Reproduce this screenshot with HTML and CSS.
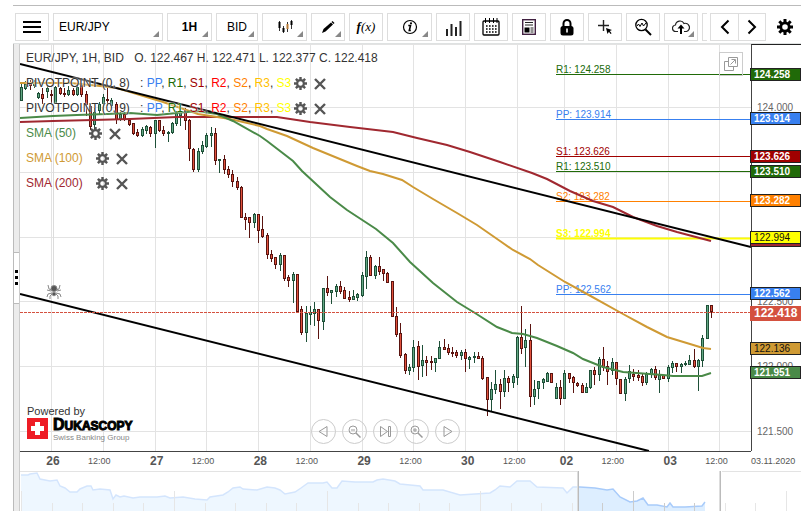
FILE: index.html
```
<!DOCTYPE html>
<html lang="en">
<head>
    <meta charset="utf-8">
    <title>EUR/JPY chart</title>
    <link rel="stylesheet" href="styles.css">
</head>
<body>
    <svg class="defs" aria-hidden="true">
        <symbol id="gear" viewBox="0 0 16 16">
            <circle cx="8" cy="8" r="4.2" fill="none" stroke="currentColor" stroke-width="2.8"/>
            <path d="M8 0v3M8 13v3M0 8h3M13 8h3M2.3 2.3l2.2 2.2M11.5 11.5l2.2 2.2M13.7 2.3l-2.2 2.2M4.5 11.5l-2.2 2.2" stroke="currentColor" stroke-width="3"/>
        </symbol>
        <symbol id="cross" viewBox="0 0 12 12">
            <path d="M1 1l10 10M11 1L1 11" stroke="currentColor" stroke-width="2.4"/>
        </symbol>
    </svg>

    <header class="toolbar">
        <div class="tools">
            <button class="tool" aria-label="Menu"><svg width="18" height="14" viewBox="0 0 18 14"><path d="M0 2h18M0 7h18M0 12h18" stroke="#000" stroke-width="2"/></svg></button>
            <button class="tool instrument more">EUR/JPY</button>
            <button class="tool wide more"><b>1H</b></button>
            <button class="tool offer more">BID</button>
            <button class="tool wide more" aria-label="Chart type"><svg width="18" height="16" viewBox="0 0 18 16"><path d="M3.500 2v10M7.500 7v7M11.500 3v10M15.500 1v9" stroke="#333"/><path d="M3.500 3v6M7.500 9v4M15.500 2v4" stroke="#000" stroke-width="2"/><path d="M11.500 5v5" stroke="#b87a35" stroke-width="2"/></svg></button>
            <button class="tool more" aria-label="Draw"><svg width="14" height="14" viewBox="0 0 14 14"><path d="M1 13l1.500-4L10 2.500l2 2L4.500 11.500z"/><path d="M10.500 2l1-1 2 2-1 1z"/></svg></button>
            <button class="tool fx" aria-label="Indicators"><i>f</i>(x)</button>
            <button class="tool wide more" aria-label="Information"><svg width="16" height="16" viewBox="0 0 16 16"><circle cx="8" cy="8" r="6.500" fill="none" stroke="#000" stroke-width="1.200"/><path d="M6.300 6.500h2.200L7.300 11.500h1.500" fill="none" stroke="#000" stroke-width="1.600"/><circle cx="9" cy="4.300" r="1.100"/></svg></button>
            <button class="tool" aria-label="Volume"><svg width="17" height="18" viewBox="0 0 17 18"><path d="M2 11v7M6.500 6v12M11 9v9M15.500 3v15" stroke="#222" stroke-width="2"/></svg></button>
            <button class="tool" aria-label="Calendar"><svg width="18" height="18" viewBox="0 0 18 18"><rect x="1" y="3" width="16" height="14" rx="1" fill="none" stroke="#000" stroke-width="1.300"/><path d="M3.500 0v5M7.500 0v5M11.500 0v5M15 0v5" stroke="#000"/><path d="M4 8h11M4 11h11M4 14h11" stroke="#000" stroke-width="1.600" stroke-dasharray="1.600 1.400"/></svg></button>
            <button class="tool" aria-label="News"><svg width="14" height="16" viewBox="0 0 14 16"><rect x=".7" y=".7" width="12.600" height="14.600" fill="none" stroke="#402040" stroke-width="1.400"/><path d="M3 3.500h8M3 6h8M8.500 9h3M8.500 11h3M8.500 13h3" stroke="#222"/><path d="M2.500 8.500h5v5h-5z"/></svg></button>
            <button class="tool" aria-label="Lock"><svg width="14" height="17" viewBox="0 0 14 17"><path d="M3.500 8V4.500a3.500 3.500 0 0 1 7 0V8" fill="none" stroke="#000" stroke-width="2"/><rect x=".5" y="7" width="13" height="9.500" rx="2.500"/><path d="M7 9.500v4" stroke="#fff" stroke-width="1.600"/></svg></button>
            <button class="tool" aria-label="Crosshair"><svg width="16" height="16" viewBox="0 0 16 16"><path d="M6.500 1v11M1 6.500h11" stroke="#222" stroke-width="1.400"/><path d="M9 9l6 2-2.200 1 1.800 2.300-1 .7-1.700-2.300L10.500 15z"/></svg></button>
            <button class="tool" aria-label="Zoom chart"><svg width="18" height="18" viewBox="0 0 18 18"><circle cx="7.500" cy="7" r="5.700" fill="none" stroke="#000" stroke-width="1.300"/><path d="M3 8l1.500-2 1.500 2.500L8 5l1.500 3L12 5" fill="none" stroke="#000"/><path d="M11.500 11.500L17 17" stroke="#000" stroke-width="2"/></svg></button>
            <button class="tool more" aria-label="Save"><svg width="18" height="16" viewBox="0 0 18 16"><path d="M6 12.500H4A3.200 3.200 0 0 1 3.500 6 4.500 4.500 0 0 1 12 4.500a4 4 0 0 1 2.500 8H12" fill="none" stroke="#222" stroke-width="1.200"/><path d="M9 15V8" stroke="#000" stroke-width="2"/><path d="M9 5.500l3.500 4h-7z"/></svg></button>
            <button class="tool" aria-label="More"></button>
        </div>
        <div class="pager">
            <button aria-label="Scroll left"><svg width="10" height="16" viewBox="0 0 10 16"><path d="M8.500 1.500L2 8l6.500 6.500" fill="none" stroke="#000" stroke-width="2"/></svg></button>
            <button aria-label="Scroll right"><svg width="10" height="16" viewBox="0 0 10 16"><path d="M1.500 1.500L8 8l-6.500 6.500" fill="none" stroke="#000" stroke-width="2"/></svg></button>
        </div>
        <button class="settings" aria-label="Settings"><svg width="16" height="16"><use href="#gear"/></svg></button>
    </header>

    <main class="workspace">
        <div class="rail">
            <button class="rail-handle" aria-label="Open side panel"><span></span><span></span><span></span></button>
        </div>

        <div class="chart">
            <section class="plot">
                <svg id="plot" class="canvas" viewBox="0 0 731 407" preserveAspectRatio="none">
                    <g id="grid" stroke="#e3e3e3"></g>
                    <path d="M33.500 0v241" stroke="#dcdcdc"/>
                    <g id="candles" shape-rendering="crispEdges"></g>
                    <g id="pivots"></g>
                    <g id="averages" fill="none" stroke-width="2"></g>
                    <path d="M0 20L731 203M0 250L629 407" stroke="#000" stroke-width="2"/>
                    <path d="M0 268.500h731" stroke="#d4513f" stroke-dasharray="3 1"/>
                    <g fill="none" stroke="#888"><path d="M32 246l-3-1-1-4M31 247l-4-1M32 249l-4 1-1 3M32 250l-2 2v3M36 246l3-1 1-4M37 247l4-1M36 249l4 1 1 3M36 250l2 2v3"/><circle cx="34" cy="244.500" r="3" fill="#555"/><circle cx="34" cy="250" r="1.800" fill="#555"/></g>
                </svg>

                <div class="legend">
                    <p class="quote">EUR/JPY, 1H, BID <span>O. 122.467 H. 122.471 L. 122.377 C. 122.418</span></p>
                    <div class="study pivot">
                        <span class="name">PIVOTPOINT (0, 8)</span>
                        <span>: <b class="pp">PP</b>, <b class="r1">R1</b>, <b class="s1">S1</b>, <b class="r2">R2</b>, <b class="s2">S2</b>, <b class="r3">R3</b>, <b class="s3">S3</b></span>
                        <button aria-label="Edit pivot point 8"><svg width="13" height="13"><use href="#gear"/></svg></button>
                        <button aria-label="Remove pivot point 8"><svg width="12" height="12"><use href="#cross"/></svg></button>
                    </div>
                    <div class="study pivot">
                        <span class="name">PIVOTPOINT (0, 9)</span>
                        <span>: <b class="pp">PP</b>, <b class="r1">R1</b>, <b class="s1">S1</b>, <b class="r2">R2</b>, <b class="s2">S2</b>, <b class="r3">R3</b>, <b class="s3">S3</b></span>
                        <button aria-label="Edit pivot point 9"><svg width="13" height="13"><use href="#gear"/></svg></button>
                        <button aria-label="Remove pivot point 9"><svg width="12" height="12"><use href="#cross"/></svg></button>
                    </div>
                    <div class="study sma50">
                        <span>SMA (50)</span>
                        <button aria-label="Edit SMA 50"><svg width="13" height="13"><use href="#gear"/></svg></button>
                        <button aria-label="Remove SMA 50"><svg width="12" height="12"><use href="#cross"/></svg></button>
                    </div>
                    <div class="study sma100">
                        <span>SMA (100)</span>
                        <button aria-label="Edit SMA 100"><svg width="13" height="13"><use href="#gear"/></svg></button>
                        <button aria-label="Remove SMA 100"><svg width="12" height="12"><use href="#cross"/></svg></button>
                    </div>
                    <div class="study sma200">
                        <span>SMA (200)</span>
                        <button aria-label="Edit SMA 200"><svg width="13" height="13"><use href="#gear"/></svg></button>
                        <button aria-label="Remove SMA 200"><svg width="12" height="12"><use href="#cross"/></svg></button>
                    </div>
                </div>

                <button class="popout" aria-label="Open in new window"><svg width="14" height="14" viewBox="0 0 14 14" fill="none" stroke="#999"><path d="M4.500.5h9v9h-9z"/><path d="M4 4.500H.5v9h9V10M6.500 7.500l4.500-4.500M7.500 2.500h4v4"/></svg></button>

                <div class="powered">
                    <div>Powered by</div>
                    <a class="brand" href="#">
                        <svg width="21" height="21" viewBox="0 0 21 21"><path fill="#ee1c25" d="M0 0h21v21H0z"/><path fill="#fff" d="M8 4h5v4h4v5h-4v4H8v-4H4V8h4z"/></svg>
                        <span class="brand-text"><strong><big>D</big>UKASCOPY</strong><small>Swiss Banking Group</small></span>
                    </a>
                </div>

                <div class="zoombar">
                    <button aria-label="Back"><svg width="13" height="13" viewBox="0 0 13 13"><path d="M10 1.500v10L2 6.500z"/></svg></button>
                    <button aria-label="Zoom out"><svg width="13" height="13" viewBox="0 0 13 13"><circle cx="5" cy="5" r="4"/><path d="M3 5h4"/><path d="M8 8l4.500 4.500" stroke-width="1.500"/></svg></button>
                    <button aria-label="To latest"><svg width="13" height="13" viewBox="0 0 13 13"><path d="M1.500 1.500v10l7-5zM9.500 1.500h2v10h-2z"/></svg></button>
                    <button aria-label="Zoom in"><svg width="13" height="13" viewBox="0 0 13 13"><circle cx="5" cy="5" r="4"/><path d="M3 5h4M5 3v4"/><path d="M8 8l4.500 4.500" stroke-width="1.500"/></svg></button>
                    <button aria-label="Forward"><svg width="13" height="13" viewBox="0 0 13 13"><path d="M3 1.500v10l8-5z"/></svg></button>
                </div>
            </section>

            <aside class="prices" id="prices"></aside>

            <div class="times">
                <div class="ticks">
                    <b>26</b><span>12:00</span><b>27</b><span>12:00</span><b>28</b><span>12:00</span><b>29</b><span>12:00</span><b>30</b><span>12:00</span>
                </div>
                <div class="ticks after-weekend">
                    <b>02</b><span>12:00</span><b>03</b><span>12:00</span>
                </div>
                <span class="date">03.11.2020</span>
            </div>

            <div class="navigator">
                <svg id="navigator" class="canvas" viewBox="0 0 781 40" preserveAspectRatio="none"></svg>
            </div>
        </div>
    </main>

    <script src="chart.js"></script>
</body>
</html>
```
FILE: styles.css
```
* {
    box-sizing: border-box;
}

body {
    margin: 0;
    padding: 5px 5px 5px 13px;
    height: 100vh;
    min-height: 400px;
    display: flex;
    flex-direction: column;
    background: #fff;
    color: #333;
    font-family: "Liberation Sans", Arial, sans-serif;
    font-size: 12px;
}

button {
    margin: 0;
    padding: 0;
    border: 0;
    background: none;
    color: inherit;
    font: inherit;
    cursor: pointer;
    display: flex;
    align-items: center;
    justify-content: center;
}

.defs {
    position: absolute;
    width: 0;
    height: 0;
}

.canvas {
    display: block;
    width: 100%;
    height: 100%;
}

/* toolbar */
.toolbar {
    display: flex;
    gap: 3px;
    padding: 7px 0 2px 2px;
    border-top: 1px solid #bbb;
    border-bottom: 1px solid #dfe2e2;
}

.tools {
    flex: 1;
    min-width: 0;
    display: flex;
    gap: 4px;
    overflow: hidden;
}

.tool {
    flex: none;
    position: relative;
    width: 34px;
    height: 28px;
    border: 1px solid #ddd;
    background: #fff;
    color: #000;
}

.tool.wide {
    width: 45px;
}

.tool.offer {
    width: 42px;
}

.tool.instrument {
    width: 110px;
    justify-content: flex-start;
    padding-left: 5px;
}

.tool.more::after {
    content: "";
    position: absolute;
    right: 3px;
    bottom: 3px;
    border-left: 6px solid transparent;
    border-bottom: 6px solid #888;
}

.tool.fx {
    font-family: "Liberation Serif", serif;
    font-size: 13px;
    font-style: italic;
}

.tool.fx i {
    font-weight: bold;
}

.pager {
    display: flex;
    border: 1px solid #ddd;
}

.pager button {
    width: 27px;
}

.pager button + button {
    border-left: 1px solid #ddd;
}

.settings {
    width: 32px;
    color: #000;
}

/* workspace */
.workspace {
    flex: 1;
    min-height: 0;
    display: flex;
}

.rail {
    width: 7px;
    display: flex;
    align-items: center;
    background: #ececec;
    border-left: 1px solid #bbb;
    border-right: 1px solid #ccc;
}

.rail-handle {
    width: 5px;
    height: 52px;
    flex-direction: column;
    gap: 3px;
    background: #fff;
    border-top: 1px solid #bbb;
    border-bottom: 1px solid #bbb;
}

.rail-handle span {
    width: 3px;
    height: 3px;
    background: #000;
}

.chart {
    flex: 1;
    min-width: 0;
    display: grid;
    grid-template-columns: 1fr 50px;
    grid-template-rows: 1fr 20px 40px;
}

.plot {
    position: relative;
    min-width: 0;
    min-height: 0;
    overflow: hidden;
}

.plot .canvas text {
    font-size: 10px;
}

/* legend */
.legend {
    position: absolute;
    left: 6px;
    top: 2px;
    line-height: 25px;
    text-shadow: 0 0 2px #fff, 0 0 2px #fff;
}

.quote {
    margin: 0;
}

.quote span {
    margin-left: 7px;
}

.study {
    display: flex;
    align-items: center;
    gap: 7px;
}

.study b {
    font-weight: normal;
}

.study button {
    color: #555;
}

.study span + button {
    margin-left: 6px;
}

.pivot span + button {
    margin-left: -4px;
}

.pivot .name {
    width: 107px;
    white-space: nowrap;
}

.pp { color: #3880f0; }
.r1 { color: #206a08; }
.s1 { color: #a00000; }
.r2 { color: #ff0000; }
.s2 { color: #ff8000; }
.r3 { color: #ffc000; }
.s3 { color: #ffff00; }
.sma50 { color: #4a8a48; }
.sma100 { color: #cf9a34; }
.sma200 { color: #a02830; }

.popout {
    position: absolute;
    top: 8px;
    right: 8px;
    width: 24px;
    height: 24px;
    border: 1px solid #ccc;
}

.powered {
    position: absolute;
    left: 7px;
    bottom: 8px;
    font-size: 11px;
    line-height: 13px;
}

.brand {
    display: flex;
    gap: 5px;
    color: #000;
    text-decoration: none;
}

.brand-text {
    display: flex;
    flex-direction: column;
}

.brand strong {
    font-size: 12px;
    font-weight: 900;
    line-height: 13px;
    -webkit-text-stroke: 1px #000;
}

.brand big {
    font-size: 16px;
    line-height: 13px;
}

.brand small {
    font-size: 8px;
    line-height: 10px;
    color: #888;
}

.zoombar {
    position: absolute;
    left: 0;
    right: 0;
    bottom: 7px;
    display: flex;
    justify-content: center;
    gap: 6px;
}

.zoombar button {
    width: 25px;
    height: 25px;
    border: 1px solid #ccc;
    border-radius: 50%;
}

.zoombar svg {
    fill: none;
    stroke: #999;
}

/* price axis */
.prices {
    position: relative;
    border-top: 1px solid #222;
    border-left: 1px solid #444;
    font-size: 10px;
    color: #666;
}

.prices span {
    position: absolute;
    left: -2px;
    right: 0;
    height: 13px;
    margin-top: -7px;
    padding-left: 4px;
    line-height: 13px;
}

.prices .scale {
    padding-left: 7px;
}

.prices .badge {
    border: 1px solid #222;
    padding-left: 3px;
    line-height: 11px;
    color: #fff;
    font-weight: bold;
}

.prices .dark {
    color: #111;
    font-weight: normal;
}

.prices .last {
    height: 15px;
    line-height: 15px;
    font-size: 12px;
    font-weight: bold;
    color: #fff;
    background: #d4513f;
}

.badge.pp { background: #3880f0; }
.badge.r1 { background: #206a08; }
.badge.s1 { background: #a00000; }
.badge.s2 { background: #ff8000; }
.badge.s3 { background: #ffff00; }
.badge.sma50 { background: #4a8a48; }
.badge.sma100 { background: #cf9a34; }
.badge.sma200 { background: #a02830; }

/* time axis */
.times {
    grid-column: 1 / -1;
    display: flex;
    align-items: center;
    padding-left: 6px;
    font-size: 9px;
    color: #555;
    background: linear-gradient(#444, #444) no-repeat 0 0 / calc(100% - 50px) 1px;
}

.ticks {
    flex: 10;
    display: grid;
    grid-auto-flow: column;
    grid-auto-columns: 1fr;
    align-items: center;
    text-align: center;
}

.ticks.after-weekend {
    flex: 4;
    margin-left: -5px;
}

.ticks b {
    font-size: 12px;
    padding-left: 2px;
}

.ticks span {
    padding-right: 9px;
}

.date {
    width: 54px;
    padding-left: 4px;
}

.navigator {
    grid-column: 1 / -1;
    min-height: 0;
}
```
FILE: chart.js
```
var NS = 'http://www.w3.org/2000/svg';

// visible price range
var TOP_PRICE = 124.49;
var RANGE = 3.14;
var HEIGHT = 407;

// every 12 hours, the weekend is left out
var gridX = [31, 83, 135, 186, 238, 290, 342, 393, 445, 497, 544, 596, 648, 699];

// one candle per hour: high top bottom low (chart units), u = up, d = down
var candles = `
38 43 57 57 u,37 40 45 46 u,36 38 42 46 d,36 38 42 44 u,48 49 54 55 u,44 50 55 60 d,42 44 48 54 u,46 50 52 60 d,
42 43 60 60 u,43 44 50 51 d,44 49 51 53 d,42 46 51 52 u,44 46 51 52 d,42 43 51 52 u,39 40 51 53 d,47 50 61 72 d,
60 62 83 86 d,64 68 81 87 u,58 60 67 70 u,50 53 60 66 u,44 55 57 62 d,54 56 62 64 u,58 60 76 80 d,68 70 76 77 u,
68 70 76 77 d,75 76 81 82 d,79 79 90 91 d,85 88 92 93 d,83 85 92 93 u,81 82 87 90 u,82 83 90 93 d,76 76 90 104 u,
76 76 87 88 d,82 86 90 92 d,87 88 90 98 u,78 79 89 90 u,67 68 80 82 u,60 68 72 82 u,64 65 77 86 d,75 76 105 117 d,
104 105 126 128 d,104 107 126 128 u,97 101 108 110 u,89 91 103 104 u,83 89 92 103 u,84 89 117 121 d,115 115 117 129 u,111 115 126 130 d,
122 125 131 134 d,126 130 138 143 d,133 137 144 146 d,142 143 174 174 d,169 173 176 186 d,173 173 179 194 d,169 170 179 184 u,170 170 187 199 d,
172 185 193 194 d,189 191 211 215 d,206 210 215 218 d,213 213 221 225 d,209 211 221 227 u,211 211 235 237 d,231 233 237 243 d,228 230 237 259 u,
230 230 268 268 d,262 265 289 291 d,262 269 289 298 u,262 268 271 281 u,258 265 270 282 u,265 265 277 295 d,244 244 278 286 u,232 244 249 252 d,
246 246 249 260 u,240 242 248 253 u,237 242 248 250 d,243 246 255 255 d,247 253 256 258 d,246 252 256 256 u,249 250 254 257 u,228 231 252 253 u,
207 213 233 245 u,211 213 232 232 d,221 222 232 235 u,213 222 228 231 d,225 225 230 237 d,228 229 239 239 d,237 237 273 273 d,263 272 291 293 d,
279 289 312 314 d,309 310 327 330 d,320 323 327 331 u,296 303 324 328 u,297 302 323 336 d,301 316 322 333 u,312 316 319 332 d,312 317 319 326 d,
314 314 319 328 u,297 303 315 315 u,295 303 306 306 d,300 304 309 311 d,303 308 310 313 d,306 308 312 314 d,306 308 312 316 u,305 308 315 328 d,
312 313 316 325 u,308 312 314 319 u,308 312 315 315 d,312 314 335 336 d,333 333 356 372 d,338 345 356 368 u,326 340 346 350 u,335 340 348 365 d,
326 334 348 353 u,332 334 339 348 d,330 332 339 344 u,292 293 334 341 u,262 293 305 310 d,285 296 304 323 u,280 296 353 363 d,336 345 353 361 u,
337 337 345 355 u,334 335 339 345 u,328 329 338 338 u,329 329 339 339 d,339 343 355 355 u,336 343 355 361 d,326 329 355 355 u,329 329 335 339 d,
332 333 339 349 d,338 339 342 343 d,339 341 349 349 d,339 343 349 349 u,326 326 344 345 u,323 326 331 341 d,313 315 331 337 u,303 315 324 327 d,
317 322 328 341 d,314 318 327 331 u,318 318 335 341 d,335 335 350 350 d,333 335 350 357 u,321 327 335 339 u,325 330 333 337 d,326 331 334 337 d,
329 332 339 342 d,328 330 339 341 u,324 325 331 334 u,322 325 334 336 d,326 331 336 349 u,331 331 335 335 d,321 323 335 338 u,317 319 324 329 u,
319 319 323 328 d,319 320 323 329 u,317 319 321 322 u,311 316 321 321 u,305 316 323 324 d,315 316 323 347 u,291 294 317 323 u,261 261 295 295 u,
261 261 268 274 d`;

var averages = [
    { color: '#a02830', points: '0,78 33,77 73,76 110,75 157,73 240,73 257,73 290,78 330,83 373,88 397,94 427,101 450,108 480,118 512,129 527,135 550,147 573,157 593,163 613,173 637,182 657,188 691,197' },
    { color: '#cf9a34', points: '0,39 50,39 80,42 97,44 120,51 143,58 178,70 210,75 240,82 247,85 267,92 293,104 337,122 350,127 363,130 382,136 393,143 413,155 437,169 457,181 480,197 493,206 510,215 518,221 545,238 567,250 603,270 627,283 647,293 670,300 683,304 691,305' },
    { color: '#4a8a48', points: '0,74 33,72 57,71 87,70 110,69 137,71 157,69 177,67 197,70 213,77 240,92 247,97 273,117 282,127 310,153 327,166 356,185 373,199 390,218 413,239 437,258 455,269 477,283 492,289 503,290 517,294 537,302 553,309 563,315 583,323 603,328 643,331 653,332 682,332 691,329' }
];

var pivots = [
    { name: 'R1', price: 124.258, color: '#206a08' },
    { name: 'PP', price: 123.914, color: '#3880f0' },
    { name: 'S1', price: 123.626, color: '#a00000' },
    { name: 'R1', price: 123.510, color: '#206a08' },
    { name: 'S2', price: 123.282, color: '#ff8000' },
    { name: 'S3', price: 122.994, color: '#ffff00', strong: true },
    { name: 'PP', price: 122.562, color: '#3880f0' }
];

var prices = [
    [124, 'scale'], [122.5, 'scale'], [122, 'scale'], [121.5, 'scale'],
    [124.258, 'badge r1'], [123.914, 'badge pp'], [123.626, 'badge s1'], [123.510, 'badge r1'],
    [123.282, 'badge s2'], [122.972, 'badge sma200'], [122.994, 'badge s3 dark'], [122.562, 'badge pp'],
    [122.418, 'last'], [122.136, 'badge sma100 dark'], [121.951, 'badge sma50']
];

var overview = '1,4 8,4 10,3 17,2 20,8 30,10 37,9 40,15 45,17 50,21 57,21 60,18 67,15 71,15 73,19 80,18 90,19 93,28 96,24 100,26 104,25 113,27 120,26 137,26 145,25 150,27 163,26 175,28 187,29 190,26 203,24 208,21 213,17 220,16 223,18 237,19 247,16 255,17 260,19 265,23 275,21 281,17 288,12 303,12 307,11 312,17 317,17 322,10 335,11 353,11 357,9 363,8 375,10 380,13 400,15 403,19 423,19 440,24 455,23 470,22 475,19 480,15 490,16 497,10 510,10 517,16 543,17 547,22 553,16 560,16 575,17 587,19 593,18 600,26 610,31 617,30 623,27 628,34 637,34 647,36 650,32 653,36 665,36 682,35 685,31';

function add(parent, tag, attrs, text) {
    var el = document.createElementNS(NS, tag);
    for (var key in attrs) {
        el.setAttribute(key, attrs[key]);
    }
    if (text) {
        el.textContent = text;
    }
    parent.appendChild(el);
    return el;
}

function priceToY(price) {
    return (TOP_PRICE - price) / RANGE * HEIGHT;
}

function drawGrid() {
    var grid = document.getElementById('grid');
    gridX.forEach(function(x) {
        add(grid, 'path', { d: 'M' + (x + 0.5) + ' 0V407' });
    });
    for (var p = 124; p >= 121.5; p -= 0.5) {
        var y = Math.floor(priceToY(p)) + 0.5;
        add(grid, 'path', { d: 'M0 ' + y + 'H731' });
    }
    add(grid, 'path', { d: 'M0 .5H731' });
}

function drawCandles() {
    var group = document.getElementById('candles');
    candles.trim().split(',').forEach(function(row, i) {
        var c = row.trim().split(' ');
        var x = Math.round(0.9 + i * 4.3125);
        var up = c[4] === 'u';
        var edge = up ? '#1e5038' : '#5a1410';
        add(group, 'rect', { x: x, y: c[0], width: 1, height: Math.max(1, c[3] - c[0]), fill: edge });
        add(group, 'rect', { x: x - 1, y: c[1], width: 3, height: Math.max(1, c[2] - c[1]), fill: edge });
        add(group, 'rect', { x: x, y: +c[1] + 1, width: 1, height: Math.max(0, c[2] - c[1] - 2), fill: up ? '#62a884' : '#e2513c' });
    });
}

function drawLines() {
    averages.forEach(function(line) {
        add(document.getElementById('averages'), 'polyline', { points: line.points, stroke: line.color });
    });
    pivots.forEach(function(p) {
        var y = Math.round(priceToY(p.price)) + 0.5;
        var group = document.getElementById('pivots');
        add(group, 'path', { d: 'M536 ' + y + 'H731', stroke: p.color, 'stroke-width': p.strong ? 2 : 1 });
        add(group, 'text', { x: 536, y: y - 2, fill: p.color, 'font-weight': p.strong ? 'bold' : 'normal' }, p.name + ': ' + p.price.toFixed(3));
    });
}

function drawPrices() {
    prices.forEach(function(p) {
        var label = document.createElement('span');
        label.className = p[1];
        // the SMA 200 badge lies under the S3 one, only its edge shows
        if (p[1] !== 'badge sma200') {
            label.textContent = p[0].toFixed(3);
        }
        label.style.top = priceToY(p[0]) / HEIGHT * 100 + '%';
        document.getElementById('prices').appendChild(label);
    });
}

function drawNavigator() {
    var nav = document.getElementById('navigator');
    add(nav, 'polygon', { points: '1,40 ' + overview + ' 685,40', fill: '#ddeeff' });
    add(nav, 'polyline', { points: overview, fill: 'none', stroke: '#a8cbfa', 'stroke-width': 1.5 });
    for (var i = 0; i < 26; i++) {
        var x = Math.round(1 + i * 30.6) + 0.5;
        add(nav, 'path', { d: 'M' + x + ' 40V' + (i % 5 === 0 ? 20 : 32), stroke: '#ccc' });
    }
    // veil over everything outside the selected range
    add(nav, 'rect', { x: 0, y: 0, width: 558, height: 40, fill: '#fff', opacity: 0.5 });
    add(nav, 'rect', { x: 702, y: 0, width: 79, height: 40, fill: '#fff', opacity: 0.5 });
    add(nav, 'path', { d: 'M0 .5H558M702 .5H781', stroke: '#e3e3e3' });
    add(nav, 'path', { d: 'M557.5 0V40M699.5 0V40', stroke: '#ddd' });
    add(nav, 'path', { d: 'M558.5 0V40M700.5 0V40', stroke: '#bbb' });
}

drawGrid();
drawCandles();
drawLines();
drawPrices();
drawNavigator();
```
